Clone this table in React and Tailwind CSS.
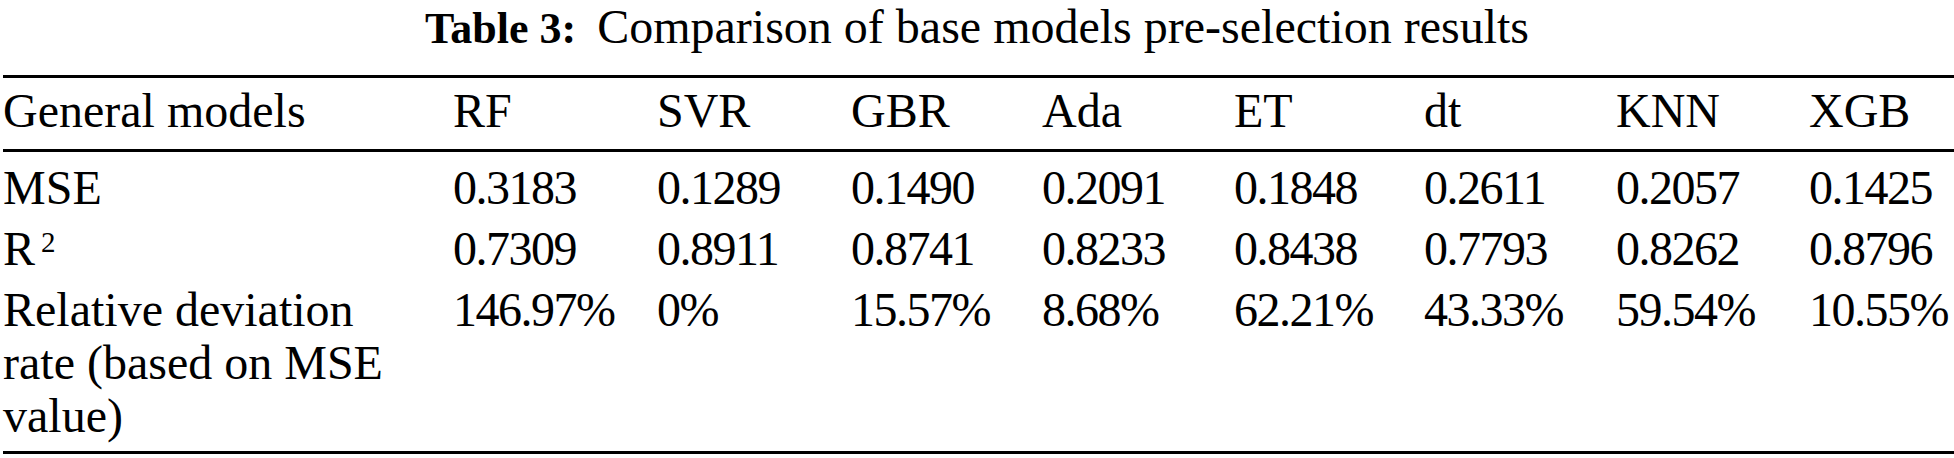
import React from 'react';

const columns = ['RF', 'SVR', 'GBR', 'Ada', 'ET', 'dt', 'KNN', 'XGB'];

const rows = [
  {
    label: 'MSE',
    values: ['0.3183', '0.1289', '0.1490', '0.2091', '0.1848', '0.2611', '0.2057', '0.1425'],
  },
  {
    label: (
      <>
        R<span className="inline-block align-top text-[29px] leading-[29px] ml-[6px] mt-[6px]">2</span>
      </>
    ),
    values: ['0.7309', '0.8911', '0.8741', '0.8233', '0.8438', '0.7793', '0.8262', '0.8796'],
  },
  {
    label: 'Relative deviation rate (based on MSE value)',
    values: ['146.97%', '0%', '15.57%', '8.68%', '62.21%', '43.33%', '59.54%', '10.55%'],
  },
];

const gridCols = 'grid grid-cols-[450px_204px_194px_191px_192px_190px_192px_193px_1fr]';

const App = () => {
  return (
    <div className="w-[1954px] h-[458px] bg-white text-black overflow-hidden font-['Liberation_Serif','Times_New_Roman',serif]">
      {/* caption */}
      <div className="flex justify-center items-baseline text-[48px] leading-[54px]">
        <span className="font-bold text-[44px]">Table 3:</span>
        <span className="ml-[21px]">Comparison of base models pre-selection results</span>
      </div>

      {/* table */}
      <div className="ml-[3px] mt-[19px] border-t-[3px] border-b-[3px] border-black text-[48px] leading-[53px]">
        <div className={`${gridCols} pt-[6px] pb-[12px] border-b-[3px] border-black`}>
          <div>General models</div>
          {columns.map((c) => (
            <div key={c}>{c}</div>
          ))}
        </div>

        <div className="pt-[5px] pb-[5px]">
          {rows.map((row, i) => (
            <div key={i} className={`${gridCols} py-[4px]`}>
              <div className="pr-[56px]">{row.label}</div>
              {row.values.map((v, j) => (
                <div key={j} className="whitespace-nowrap tracking-[-1.5px]">{v}</div>
              ))}
            </div>
          ))}
        </div>
      </div>
    </div>
  );
};

export default App;
